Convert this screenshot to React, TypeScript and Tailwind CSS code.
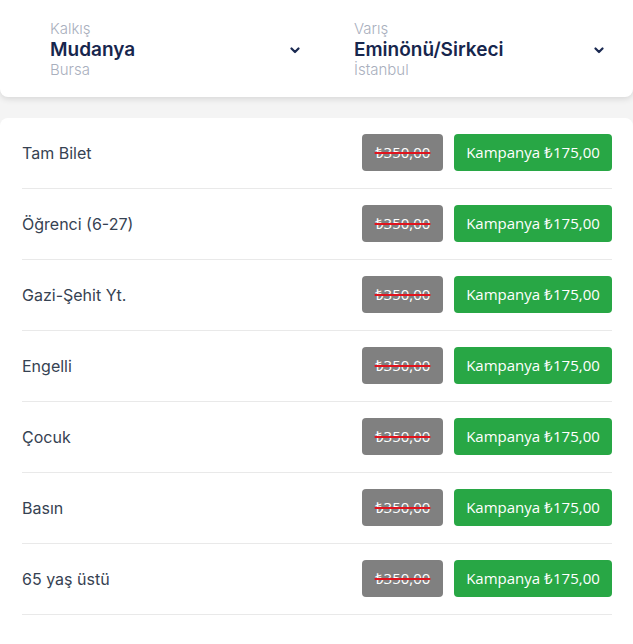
import React from "react";

const rows = ["Tam Bilet", "Öğrenci (6-27)", "Gazi-Şehit Yt.", "Engelli", "Çocuk", "Basın", "65 yaş üstü"];

function Chevron() {
  return (
    <svg width="10" height="7" viewBox="0 0 10 7" className="shrink-0 mt-[2px]">
      <path d="M1.5 1.5 L5 5 L8.5 1.5" fill="none" stroke="#1b2a52" strokeWidth="2.2" strokeLinecap="round" strokeLinejoin="round" />
    </svg>
  );
}

function Place({ label, name, city }: { label: string; name: string; city: string }) {
  return (
    <div className="flex items-center justify-between">
      <div className="flex flex-col">
        <span className="text-[15px] leading-[18px] font-light text-[#a9afbd]">{label}</span>
        <span className="text-[19px] leading-[23px] font-semibold text-[#17264d]">{name}</span>
        <span className="text-[15px] leading-[18px] font-light text-[#a9afbd]">{city}</span>
      </div>
      <Chevron />
    </div>
  );
}

export default function App() {
  return (
    <div className="w-[633px] h-[644px] bg-[#f4f4f4] overflow-hidden" style={{ fontFamily: "Inter, 'Open Sans', sans-serif" }}>
      <div className="bg-white rounded-b-lg shadow-[0_2px_6px_rgba(0,0,0,0.12)] h-[97px] pl-[50px] pt-[1px] grid grid-cols-[250px_250px] gap-x-[54px] content-center">
        <Place label="Kalkış" name="Mudanya" city="Bursa" />
        <Place label="Varış" name="Eminönü/Sirkeci" city="İstanbul" />
      </div>
      <div className="mt-[21px] bg-white rounded-t-lg pl-[22px] pr-[21px] h-[600px]">
        {rows.map((r) => (
          <div key={r} className="h-[71px] flex items-center justify-between border-b border-[#e9e9e9]">
            <span className="text-[16px] text-[#364252]">{r}</span>
            <div className="flex gap-[11px] pb-[1px]">
              <div className="w-[81px] h-[37px] rounded bg-[#808080] flex items-center justify-center text-white text-[15px]" style={{ fontFamily: "'Open Sans', sans-serif" }}>
                <span className="line-through decoration-[#e0141e] decoration-2">₺350,00</span>
              </div>
              <div className="w-[158px] h-[37px] rounded bg-[#28a745] flex items-center justify-center text-white text-[15px]" style={{ fontFamily: "'Open Sans', sans-serif" }}>
                Kampanya ₺175,00
              </div>
            </div>
          </div>
        ))}
      </div>
    </div>
  );
}
